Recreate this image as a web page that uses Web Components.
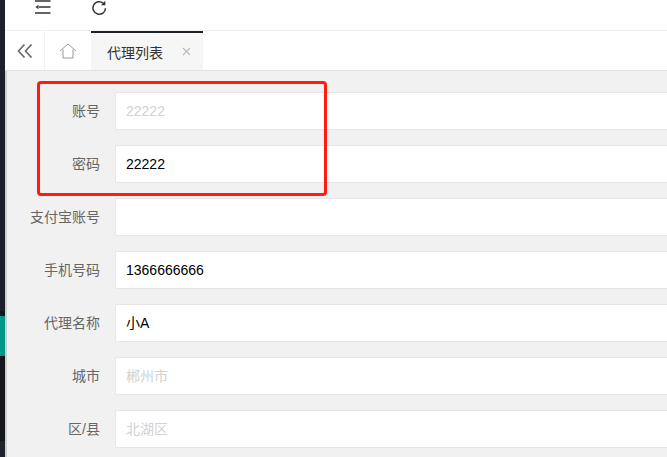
<!DOCTYPE html>
<html>
<head>
<meta charset="utf-8">
<style>
html, body {
  margin: 0;
  height: 100%;
  overflow: hidden;
}
body {
  font-family: "Liberation Sans", "Noto Sans CJK SC", sans-serif;
  font-size: 14px;
}
</style>
</head>
<body>
<admin-shell>
  <form-row label="账号" value="22222" disabled></form-row>
  <form-row label="密码" value="22222"></form-row>
  <form-row label="支付宝账号" value=""></form-row>
  <form-row label="手机号码" value="1366666666"></form-row>
  <form-row label="代理名称" value="小A"></form-row>
  <form-row label="城市" value="郴州市" disabled></form-row>
  <form-row label="区/县" value="北湖区" disabled></form-row>
</admin-shell>

<script>
const sideBarTemplate = document.createElement("template");
sideBarTemplate.innerHTML = `
<style>
:host {
  display: flex;
  flex-direction: column;
  width: 5px;
  flex: none;
  background: #1c2029;
}
.top { height: 311px; flex: none; }
.list { flex: 1; background: #14161b; padding-top: 5px; }
.active { height: 40px; background: #009688; }
.bottom { height: 16px; flex: none; background: #1f232c; }
</style>
<div class="top"></div>
<div class="list"><div class="active"></div></div>
<div class="bottom"></div>
`;
class SideBar extends HTMLElement {
  constructor() {
    super();
    this.attachShadow({ mode: "open" });
    this.shadowRoot.appendChild(sideBarTemplate.content.cloneNode(true));
  }
}
customElements.define("side-bar", SideBar);

const topBarTemplate = document.createElement("template");
topBarTemplate.innerHTML = `
<style>
:host {
  display: flex;
  height: 30px;
  flex: none;
  background: #fff;
  border-bottom: 1px solid #f0f0f0;
  padding-left: 30px;
  gap: 40px;
  align-items: flex-start;
}
svg {
  display: block;
  stroke: #333;
  fill: none;
}
</style>
<svg width="16" height="16" viewBox="0 0 16 16" stroke-width="1.3">
  <path d="M0 1h15.500M4 7h11.500M0 13h15.500"/>
  <path d="M0.500 7l3-2.200v4.400z" fill="#333" stroke="none"/>
</svg>
<svg width="16" height="16" viewBox="0 0 16 16" stroke-width="1.5">
  <path d="M14.500 8.200a6.300 6.300 0 1 1-2.200-5"/>
  <path d="M14.300 0.800v4.400h-4.400z" fill="#333" stroke="none"/>
</svg>
`;
class TopBar extends HTMLElement {
  constructor() {
    super();
    this.attachShadow({ mode: "open" });
    this.shadowRoot.appendChild(topBarTemplate.content.cloneNode(true));
  }
}
customElements.define("top-bar", TopBar);

const tabBarTemplate = document.createElement("template");
tabBarTemplate.innerHTML = `
<style>
:host {
  display: flex;
  height: 39px;
  flex: none;
  background: #fff;
  border-bottom: 1px solid #e2e2e2;
}
.btn {
  display: flex;
  align-items: center;
  justify-content: center;
  border-right: 1px solid #f2f2f2;
  flex: none;
}
.back { width: 39px; }
.home { width: 46px; border-right: 0; }
.tab {
  display: flex;
  align-items: center;
  width: 112px;
  box-sizing: border-box;
  background: #f6f6f6;
  border-top: 2px solid #1f2229;
  padding-left: 16px;
  color: #333;
  font-size: 14px;
}
.close {
  margin-left: 19px;
  display: block;
}
svg { display: block; fill: none; }
</style>
<div class="btn back">
  <svg width="16" height="14" viewBox="0 0 16 14" stroke="#666" stroke-width="1.600">
    <path d="M7.500 0.500L1.500 7l6 6.500M14.500 0.500L8.500 7l6 6.500"/>
  </svg>
</div>
<div class="btn home">
  <svg width="18" height="16" viewBox="0 0 18 16" stroke="#999" stroke-width="1">
    <path d="M1 8l8-7 8 7M4 6.500v8.500h10V6.500"/>
  </svg>
</div>
<div class="tab">代理列表<svg class="close" width="9" height="9" viewBox="0 0 9 9" stroke="#bbb" stroke-width="1.100"><path d="M1 1l7 7M8 1l-7 7"/></svg></div>
`;
class TabBar extends HTMLElement {
  constructor() {
    super();
    this.attachShadow({ mode: "open" });
    this.shadowRoot.appendChild(tabBarTemplate.content.cloneNode(true));
  }
}
customElements.define("tab-bar", TabBar);

const formRowTemplate = document.createElement("template");
formRowTemplate.innerHTML = `
<style>
:host {
  display: flex;
  height: 38px;
  align-items: center;
}
#label {
  width: 90px;
  flex: none;
  text-align: right;
  color: #666;
  font-size: 14px;
  padding: 0 15px 2px 0;
  box-sizing: border-box;
}
#box {
  flex: 1;
  height: 38px;
  box-sizing: border-box;
  background: #fff;
  border: 1px solid #e6e6e6;
  border-right: 0;
  border-radius: 2px 0 0 2px;
  padding-left: 10px;
  line-height: 36px;
  font-size: 14px;
  color: #000;
}
:host([disabled]) #box { color: #d2d2d2; }
</style>
<div id="label"></div>
<div id="box"></div>
`;
class FormRow extends HTMLElement {
  constructor() {
    super();
    this.attachShadow({ mode: "open" });
    this.shadowRoot.appendChild(formRowTemplate.content.cloneNode(true));
  }
  static get observedAttributes() {
    return ["label", "value"];
  }
  attributeChangedCallback(attribute, oldValue, newValue) {
    if (attribute == "label") {
      this.shadowRoot.querySelector("#label").textContent = newValue;
    }
    if (attribute == "value") {
      this.shadowRoot.querySelector("#box").textContent = newValue;
    }
  }
}
customElements.define("form-row", FormRow);

const adminShellTemplate = document.createElement("template");
adminShellTemplate.innerHTML = `
<style>
:host {
  display: flex;
  height: 457px;
  overflow: hidden;
}
.main {
  flex: 1;
  display: flex;
  flex-direction: column;
  min-width: 0;
  position: relative;
}
.content {
  flex: 1;
  background: #f1f1f1;
  border-left: 2px solid #cfcfcf;
  padding: 21px 0 0 18px;
  display: flex;
  flex-direction: column;
  gap: 15px;
}
.mark {
  position: absolute;
  left: 32px;
  top: 81px;
  width: 284px;
  height: 109px;
  border: 3px solid #ff1c0f;
  border-radius: 4px;
}
</style>
<side-bar></side-bar>
<div class="main">
  <top-bar></top-bar>
  <tab-bar></tab-bar>
  <div class="content"><slot></slot></div>
  <div class="mark"></div>
</div>
`;
class AdminShell extends HTMLElement {
  constructor() {
    super();
    this.attachShadow({ mode: "open" });
    this.shadowRoot.appendChild(adminShellTemplate.content.cloneNode(true));
  }
}
customElements.define("admin-shell", AdminShell);
</script>
</body>
</html>
